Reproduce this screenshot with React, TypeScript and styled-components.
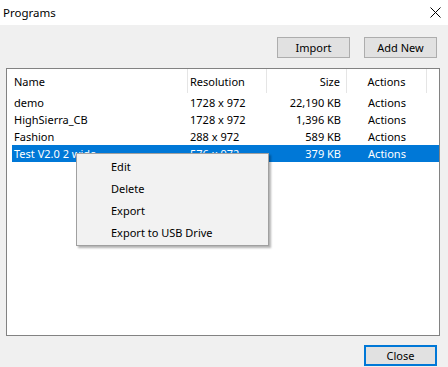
import styled, { createGlobalStyle } from "styled-components";

const GlobalStyle = createGlobalStyle`
  html, body {
    margin: 0;
    padding: 0;
    background: #f0f0f0;
  }
  body {
    font-family: "Segoe UI", "Noto Sans", sans-serif;
    font-size: 11px;
    color: #000;
  }
`;

const Window = styled.div`
  position: relative;
  width: 448px;
  height: 367px;
  background: #f0f0f0;
  overflow: hidden;
`;

const TitleBar = styled.div`
  height: 25px;
  background: #ffffff;
  display: flex;
  align-items: center;
  justify-content: space-between;
  padding: 0 7px 0 3px;
  box-sizing: border-box;
  font-size: 11.5px;
`;

const Toolbar = styled.div`
  display: flex;
  justify-content: flex-end;
  gap: 14px;
  padding: 12px 11px 0 0;
`;

const Button = styled.button<{ $focused?: boolean }>`
  width: 73px;
  height: 21px;
  box-sizing: border-box;
  background: #e1e1e1;
  border: ${(p) => (p.$focused ? "2px solid #0078d7" : "1px solid #adadad")};
  font-family: inherit;
  font-size: 11px;
  color: #000;
  padding: 0;
  margin: 0;
`;

const ListBox = styled.div`
  margin: 10px 8px 0 6px;
  height: 268px;
  box-sizing: border-box;
  background: #ffffff;
  border: 1px solid #828282;
  padding: 0 0 0 5px;
`;

const Row = styled.div<{ $selected?: boolean; $header?: boolean }>`
  display: grid;
  grid-template-columns: 176px 79px 80px 80px;
  height: ${(p) => (p.$header ? "24px" : "17px")};
  align-items: center;
  background: ${(p) => (p.$selected ? "#0078d7" : "transparent")};
  color: ${(p) => (p.$selected ? "#ffffff" : "#000000")};
  margin-bottom: ${(p) => (p.$header ? "1px" : "0")};
`;

const Cell = styled.div<{ $align?: "left" | "right" | "center"; $header?: boolean }>`
  height: 100%;
  display: flex;
  align-items: center;
  justify-content: ${(p) =>
    p.$align === "right" ? "flex-end" : p.$align === "center" ? "center" : "flex-start"};
  padding: ${(p) => (p.$align === "right" ? "0 6px 0 0" : p.$align === "center" ? "0" : "0 0 0 2px")};
  box-sizing: border-box;
  white-space: nowrap;
  overflow: hidden;
  border-right: ${(p) => (p.$header ? "1px solid #e5e5e5" : "none")};
`;

const Footer = styled.div`
  display: flex;
  justify-content: flex-end;
  padding: 9px 11px 0 0;
`;

const ContextMenu = styled.div`
  position: absolute;
  left: 76px;
  top: 153px;
  width: 193px;
  box-sizing: border-box;
  background: #f2f2f2;
  border: 1px solid #a0a0a0;
  box-shadow: 2px 2px 2px rgba(0, 0, 0, 0.3);
  padding: 1px 0 2px;
`;

const MenuItem = styled.div`
  height: 22px;
  display: flex;
  align-items: center;
  padding-left: 34px;
`;

const programs = [
  { name: "demo", res: "1728 x 972", size: "22,190 KB" },
  { name: "HighSierra_CB", res: "1728 x 972", size: "1,396 KB" },
  { name: "Fashion", res: "288 x 972", size: "589 KB" },
  { name: "Test V2.0 2 wide", res: "576 x 972", size: "379 KB" },
];

const CloseIcon = () => (
  <svg width="11" height="11" viewBox="0 0 11 11">
    <path d="M0.5 0.5 L10.5 10.5 M10.5 0.5 L0.5 10.5" stroke="#000" strokeWidth="1" fill="none" />
  </svg>
);

export default function App() {
  return (
    <Window>
      <GlobalStyle />
      <TitleBar>
        <span>Programs</span>
        <CloseIcon />
      </TitleBar>
      <Toolbar>
        <Button>Import</Button>
        <Button>Add New</Button>
      </Toolbar>
      <ListBox>
        <Row $header>
          <Cell $header>Name</Cell>
          <Cell $header>Resolution</Cell>
          <Cell $header $align="right">Size</Cell>
          <Cell $header $align="center">Actions</Cell>
        </Row>
        {programs.map((p, i) => (
          <Row key={p.name} $selected={i === 3}>
            <Cell>{p.name}</Cell>
            <Cell>{p.res}</Cell>
            <Cell $align="right">{p.size}</Cell>
            <Cell $align="center">Actions</Cell>
          </Row>
        ))}
      </ListBox>
      <Footer>
        <Button $focused>Close</Button>
      </Footer>
      <ContextMenu>
        <MenuItem>Edit</MenuItem>
        <MenuItem>Delete</MenuItem>
        <MenuItem>Export</MenuItem>
        <MenuItem>Export to USB Drive</MenuItem>
      </ContextMenu>
    </Window>
  );
}
